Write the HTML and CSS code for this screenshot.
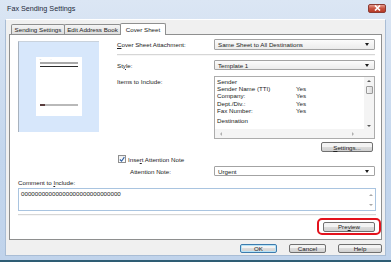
FILE: index.html
```html
<!doctype html>
<html lang="en">
  <head>
    <meta charset="UTF-8" />
    <title>Fax Sending Settings</title>
    <link rel="stylesheet" href="styles.css">
  </head>
  <body>
    <div class="window">
      <div class="titlebar">
        <span class="title">Fax Sending Settings</span>
        <span class="close">
          <svg width="9" height="6" viewBox="0 0 9 6"><path d="M2 0.5 L7 5.5 M7 0.5 L2 5.5" stroke="#fff" stroke-width="1.6"/></svg>
        </span>
      </div>
      <div class="client">
        <div class="tabs">
          <div class="tab tab-send">Sending Settings</div>
          <div class="tab tab-book">Edit Address Book</div>
          <div class="tab active">Cover Sheet</div>
        </div>
        <div class="panel">
          <div class="top">
            <div class="thumb">
              <div class="paper">
                <div class="p-mark">~ &nbsp; &nbsp; &nbsp; &nbsp; &nbsp; ·</div>
                <div class="p-line gray"></div>
                <div class="p-line dark"></div>
                <div class="p-space"></div>
                <div class="p-line gray foot"></div>
              </div>
            </div>
            <div class="form">
              <div class="row">
                <span class="label"><u>C</u>over Sheet Attachment:</span>
                <div class="combo">Same Sheet to All Destinations<i class="arrow"></i></div>
              </div>
              <div class="sep"></div>
              <div class="row row-style">
                <span class="label">St<u>y</u>le:</span>
                <div class="combo">Template 1<i class="arrow"></i></div>
              </div>
              <div class="row row-items">
                <span class="label">Items to Include:</span>
                <div class="list">
                  <div class="list-body">
                    <div class="list-text">
                      <div>Sender</div>
                      <div class="item">Sender Name (TTI)<span>Yes</span></div>
                      <div class="item">Company:<span>Yes</span></div>
                      <div class="item">Dept./Div.:<span>Yes</span></div>
                      <div class="item">Fax Number:<span>Yes</span></div>
                      <div class="blank"></div>
                      <div>Destination</div>
                    </div>
                    <div class="vscroll">
                      <span class="sa up"></span>
                      <span class="thumbbar"></span>
                      <span class="sa down"></span>
                    </div>
                  </div>
                  <div class="hscroll">
                    <span class="sa left"></span>
                    <span class="sa right"></span>
                  </div>
                </div>
              </div>
              <div class="btn-row">
                <div class="btn"><u>S</u>ettings...</div>
              </div>
              <div class="check-row">
                <span class="checkbox">
                  <svg width="7" height="7" viewBox="0 0 7 7"><path d="M1 3.5 L3 5.5 L6.2 0.8" stroke="#2d5fa3" stroke-width="1.3" fill="none"/></svg>
                </span>
                <span>Inse<u>r</u>t Attention Note</span>
              </div>
              <div class="row row-note">
                <span class="label">Attention Note:</span>
                <div class="combo">Urgent<i class="arrow"></i></div>
              </div>
            </div>
          </div>
          <div class="comment">
            <div class="comment-label">Comment to <u>I</u>nclude:</div>
            <div class="textarea">
              <span>00000000000000000000000000000</span>
              <div class="tscroll">
                <span class="sa up light"></span>
                <span class="sa down light"></span>
              </div>
            </div>
            <div class="sep wide"></div>
            <div class="btn-row preview-row">
              <div class="highlight">
                <div class="btn">Pre<u>v</u>iew</div>
              </div>
            </div>
          </div>
        </div>
        <div class="buttons">
          <div class="btn default">OK</div>
          <div class="btn">Cancel</div>
          <div class="btn help">Help</div>
        </div>
      </div>
    </div>
  </body>
</html>
```

FILE: styles.css
```css
/* Dialog window */
body {
  margin: 0;
  font-family: "Liberation Sans", Arial, sans-serif;
  font-size: 6.2px;
  color: #222222;
  background: #c5d7ed;
}
u {
  text-decoration: underline;
}
.window {
  width: 391px;
  height: 262px;
  box-sizing: border-box;
  background: linear-gradient(#dbe6f4, #c3d6ed 60%, #c0d3eb);
  border-bottom: 2px solid #2e5d74;
  overflow: hidden;
}
.titlebar {
  height: 19px;
  display: flex;
  align-items: center;
  justify-content: space-between;
  padding: 0 5px 0 7px;
}
.title {
  font-size: 7.2px;
  color: #1e2a3a;
  margin-top: -2px;
}
.close {
  width: 18px;
  height: 9px;
  margin-top: -3px;
  box-sizing: border-box;
  border: 1px solid #8c3b33;
  border-radius: 2px;
  background: linear-gradient(#e59c90, #c8523f 50%, #b73a26);
  display: flex;
  align-items: center;
  justify-content: center;
}
.client {
  margin-left: 5px;
  width: 381px;
  height: 237px;
  box-sizing: border-box;
  background: #f0f0f0;
  border: 1px solid #a9bdd5;
  border-top-color: #ffffff;
  padding: 2px 3px 0 3px;
}

/* Tabs */
.tabs {
  display: flex;
  align-items: flex-end;
  height: 12px;
  padding-left: 2px;
}
.tab {
  height: 10px;
  box-sizing: border-box;
  border: 1px solid #8e8f8f;
  border-bottom: none;
  border-radius: 2px 2px 0 0;
  background: linear-gradient(#f4f4f4, #dedede);
  display: flex;
  align-items: center;
  justify-content: center;
  margin-right: -1px;
}
.tab-send {
  width: 54px;
}
.tab-book {
  width: 57px;
}
.tab.active {
  width: 46px;
  height: 12px;
  background: #ffffff;
  position: relative;
  margin-bottom: -1px;
  z-index: 1;
  padding-bottom: 1px;
}
.panel {
  height: 206px;
  box-sizing: border-box;
  background: #ffffff;
  border: 1px solid #8e8f8f;
  padding: 4px 6px 0 8px;
}

/* Preview thumbnail + form */
.top {
  display: flex;
}
.thumb {
  width: 82px;
  height: 91px;
  margin-top: 2px;
  box-sizing: border-box;
  background: #d7e7fb;
  border-left: 1px solid #a8b2be;
  border-top: 1px solid #c9d2dc;
  display: flex;
  justify-content: center;
  padding-top: 15px;
  padding-right: 1px;
}
.paper {
  width: 46px;
  height: 59px;
  background: #ffffff;
  box-sizing: border-box;
  padding: 2px 4px 0 4px;
}
.p-mark {
  font-size: 3px;
  color: #8a8a8a;
  height: 3px;
  line-height: 3px;
}
.p-line {
  height: 1px;
}
.p-line.gray {
  height: 2px;
  background: #a9a9a9;
}
.p-line.dark {
  margin-top: 2px;
  background: #2b2b2b;
}
.p-space {
  height: 37px;
}
.p-line.foot {
  background: linear-gradient(90deg, #5a3d3d 0 5px, #b9b9b9 5px);
}
.form {
  margin-left: 18px;
  width: 258px;
}
.row {
  display: flex;
  align-items: center;
}
.label {
  width: 97px;
  flex: none;
}
.combo {
  width: 161px;
  height: 11px;
  box-sizing: border-box;
  border: 1px solid #a3a3a3;
  border-radius: 1px;
  background: linear-gradient(#fbfbfb, #ebebeb);
  padding-left: 3px;
  display: flex;
  align-items: center;
  justify-content: space-between;
  padding-right: 5px;
}
.arrow {
  width: 0;
  height: 0;
  border-left: 2.5px solid transparent;
  border-right: 2.5px solid transparent;
  border-top: 3px solid #1a1a1a;
}
.sep {
  height: 1px;
  margin-top: 4px;
  background: #d6d6d6;
  border-bottom: 1px solid #f6f6f6;
}
.row-style {
  margin-top: 4px;
}
.row-style .combo {
  height: 10px;
}
.row-items {
  margin-top: 6px;
  align-items: flex-start;
}
.row-items .label {
  margin-top: 2px;
}
.list {
  width: 161px;
  height: 63px;
  box-sizing: border-box;
  border: 1px solid #acacac;
  display: flex;
  flex-direction: column;
}
.list-body {
  flex: 1;
  display: flex;
}
.list-text {
  flex: 1;
  padding: 1px 0 0 2px;
  line-height: 7.2px;
}
.item {
  display: flex;
}
.item span {
  margin-left: auto;
  width: 68px;
}
.blank {
  height: 3px;
}
.vscroll {
  width: 10px;
  background: #f4f4f4;
  display: flex;
  flex-direction: column;
  align-items: center;
  padding: 3px 0 2px;
  box-sizing: border-box;
}
.thumbbar {
  width: 7px;
  height: 8px;
  margin-top: 4px;
  box-sizing: border-box;
  border: 1px solid #9a9a9a;
  border-radius: 1px;
  background: linear-gradient(90deg, #f5f5f5, #dcdcdc);
}
.vscroll .down {
  margin-top: auto;
}
.hscroll {
  height: 9px;
  background: #f4f4f4;
  display: flex;
  align-items: center;
  justify-content: space-between;
  padding: 0 20px 0 5px;
}
.sa {
  width: 0;
  height: 0;
}
.sa.up {
  border-left: 2px solid transparent;
  border-right: 2px solid transparent;
  border-bottom: 2px solid #5a5a5a;
}
.sa.down {
  border-left: 2px solid transparent;
  border-right: 2px solid transparent;
  border-top: 2px solid #5a5a5a;
}
.sa.left {
  border-top: 2px solid transparent;
  border-bottom: 2px solid transparent;
  border-right: 2px solid #b0b0b0;
}
.sa.right {
  border-top: 2px solid transparent;
  border-bottom: 2px solid transparent;
  border-left: 2px solid #b0b0b0;
}
.sa.light.up {
  border-bottom-color: #a8a8a8;
}
.sa.light.down {
  border-top-color: #a8a8a8;
}

/* Buttons */
.btn-row {
  display: flex;
  justify-content: flex-end;
  padding-right: 2px;
  margin-top: 3px;
}
.btn {
  width: 52px;
  height: 10px;
  box-sizing: border-box;
  border: 1px solid #707070;
  border-radius: 2px;
  background: linear-gradient(#f3f3f3 50%, #dcdcdc 50%, #d0d0d0);
  display: flex;
  align-items: center;
  justify-content: center;
}
.check-row {
  display: flex;
  align-items: center;
  margin-top: 3px;
  padding-left: 1px;
}
.checkbox {
  width: 8px;
  height: 8px;
  box-sizing: border-box;
  border: 1px solid #8f8f8f;
  background: linear-gradient(#f0f0f0, #ffffff);
  display: flex;
  align-items: center;
  justify-content: center;
  margin-right: 2px;
}
.row-note {
  margin-top: 3px;
}
.row-note .label {
  padding-left: 13px;
  box-sizing: border-box;
}
.row-note .combo {
  height: 10px;
  background: #ffffff;
}

/* Comment */
.comment {
  margin-top: 3px;
  width: 358px;
}
.comment-label {
  height: 8px;
  line-height: 8px;
}
.textarea {
  height: 23px;
  margin-top: 1px;
  box-sizing: border-box;
  border: 1px solid #a9c4e0;
  display: flex;
  justify-content: space-between;
  padding: 1px 0 0 2px;
}
.tscroll {
  width: 9px;
  display: flex;
  flex-direction: column;
  align-items: center;
  justify-content: space-between;
  padding: 4px 0 4px;
}
.sep.wide {
  margin-top: 3px;
}
.preview-row {
  margin-top: 2px;
  padding-right: 0;
}
.highlight {
  width: 64px;
  height: 17px;
  box-sizing: border-box;
  border: 2px solid #e3131d;
  border-radius: 5px;
  display: flex;
  align-items: center;
  justify-content: center;
  margin-right: -5px;
}
.buttons {
  display: flex;
  justify-content: flex-end;
  gap: 12px;
  margin-top: 4px;
  padding-right: 0;
}
.buttons .btn {
  width: 37px;
  height: 9px;
}
.buttons .btn.default {
  border-color: #3d7bad;
  box-shadow: inset 0 0 0 1px #b6e3f7;
}
.buttons .btn.help {
  width: 44px;
}
```
